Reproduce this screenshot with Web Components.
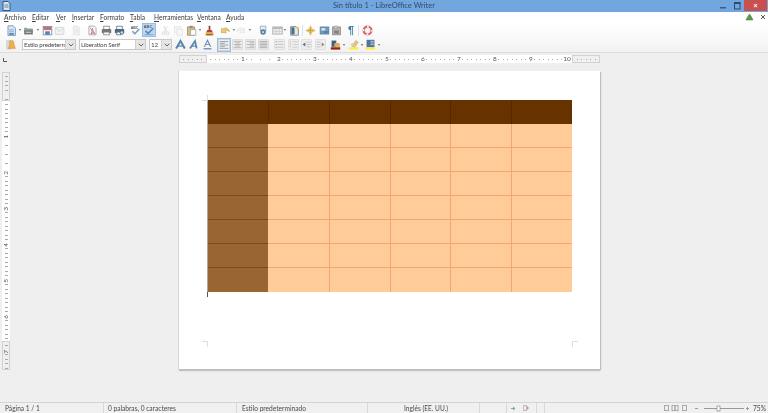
<!DOCTYPE html>
<html lang="es"><head><meta charset="utf-8"><title>Sin título 1 - LibreOffice Writer</title>
<style>
html,body{margin:0;height:100%;overflow:hidden}
body{display:flex;flex-direction:column;width:768px;height:413px;background:#efefef;font-family:Lato,"Open Sans",sans-serif;color:#444}
lo-workspace{flex:1;min-height:0}
</style></head><body>
<lo-titlebar>Sin título 1 - LibreOffice Writer</lo-titlebar>
<lo-chrome>
  <lo-menubar></lo-menubar>
  <lo-toolbar data-row="1"></lo-toolbar>
  <lo-toolbar data-row="2"></lo-toolbar>
</lo-chrome>
<lo-hruler></lo-hruler>
<lo-workspace>
  <lo-vruler slot="ruler"></lo-vruler>
  <lo-page><lo-table></lo-table></lo-page>
</lo-workspace>
<lo-statusbar></lo-statusbar>
<script>
const align=(c,pat)=>`<rect x=".5" y=".5" width="13" height="13" rx="1" fill="#eee" stroke="#d4d4d4"/>`+[3,5,7,9,11].map((y,i)=>`<path d="M${pat[i%2][0]} ${y}H${pat[i%2][1]}" stroke="${c}"/>`).join('');
const ICONS={
new:`<path d="M2.500 1H9l3 3v9.500H2.500z" fill="#dbe6f2" stroke="#5f8cbc"/><path d="M4 6h6M4 8h6" stroke="#7aa3cc"/><rect x="4" y="10" width="6" height="2.500" fill="#5a86ad"/>`,
open:`<path d="M2 4h3l1 1h6v3H2z" fill="#9aa5a9" stroke="#6d797e" stroke-width=".7"/><rect x="1.500" y="7" width="11" height="5" fill="#6c797e"/><rect x="3.500" y="8.500" width="7" height="1.500" fill="#c2c9cc"/>`,
save:`<rect x="1.500" y="2" width="11" height="10.500" fill="#fff" stroke="#5f82ad"/><rect x="2" y="2.500" width="10" height="4" fill="#cf6a6d"/><rect x="4" y="8" width="6" height="4.500" fill="#5f82ad"/>`,
mail:`<rect x="1.500" y="3" width="11" height="9" rx="1" fill="#f2f2f2" stroke="#d0d0d0"/><path d="M2 4l5 4 5-4" fill="none" stroke="#d0d0d0"/>`,
edit:`<path d="M3 1.500h6l2 2v9H3z" fill="#f2f2f2" stroke="#e0e0e0"/><path d="M5 5h4M5 7h4M5 9h4" stroke="#e2e2e2"/>`,
pdf:`<path d="M2.500 1.500h7l2 2v9h-9z" fill="#fafafa" stroke="#999"/><path d="M4 4c3 2 3 5 1 7 2-1 4-1 5 0-2-2-3-4-3-7" fill="none" stroke="#c94f4f" stroke-width="1.100"/>`,
print:`<rect x="3.500" y="1.500" width="7" height="4" fill="#fff" stroke="#7d7d7d"/><rect x="1" y="5" width="12" height="5.500" rx="1" fill="#71787b"/><rect x="3.500" y="9" width="7" height="3.500" fill="#fff" stroke="#7d7d7d"/>`,
preview:`<rect x="3.500" y="1.500" width="7" height="4" fill="#fff" stroke="#587280"/><rect x="1" y="5" width="12" height="5.500" rx="1" fill="#4f6b79"/><rect x="3.500" y="9" width="5" height="3.500" fill="#fff" stroke="#587280"/><circle cx="10" cy="9.500" r="2.300" fill="#bcd6e6" stroke="#3d5d6d"/>`,
spell:`<text x="1" y="5" font-size="4.500" font-weight="700" font-family="Liberation Sans" fill="#555">ABC</text><path d="M3 8l3 3 6-6" fill="none" stroke="#6a9bc8" stroke-width="1.800"/>`,
auto:`<text x="1" y="5" font-size="4.500" font-weight="700" font-family="Liberation Sans" fill="#555">ABC</text><path d="M3 8l3 3 6-6" fill="none" stroke="#4f86bd" stroke-width="1.800"/><path d="M2 12.500h10" stroke="#6a9bc8"/>`,
cut:`<path d="M5 1.500l3 7M9 1.500l-3 7" stroke="#d8d8d8" stroke-width="1.200"/><circle cx="4.500" cy="10.500" r="1.800" fill="none" stroke="#d4d4d4"/><circle cx="9.500" cy="10.500" r="1.800" fill="none" stroke="#d4d4d4"/>`,
copy:`<rect x="2" y="2" width="7" height="8" fill="#f6f6f6" stroke="#e4e4e4"/><rect x="5" y="5" width="7" height="8" fill="#f6f6f6" stroke="#e4e4e4"/>`,
paste:`<rect x="2" y="2.500" width="9" height="10.500" fill="#d7ba8a" stroke="#a78c5f"/><rect x="4.500" y="1" width="4" height="3" fill="#8f8f8f"/><rect x="6" y="6" width="6.500" height="7" fill="#fff" stroke="#a5a5a5"/>`,
brush:`<path d="M6 1h2v5H6z" fill="#6a3a2c"/><path d="M4.500 6h5l1.500 3H3z" fill="#b93a3d"/><path d="M2.500 9h9l1 4h-11z" fill="#e8a84c"/><path d="M3 12.500h8" stroke="#523"/>`,
undo:`<path d="M3 5.500C6 2.500 11 3.500 12 8.500 10 6.500 8 6.500 6.500 7.500L8 10 1.500 9.500 2 4z" fill="#ecca72" stroke="#b79a50" stroke-width=".7"/>`,
redo:`<path d="M11 5.500C8 2.500 3 3.500 2 8.500 4 6.500 6 6.500 7.500 7.500L6 10 12.500 9.500 12 4z" fill="#f2f2f2" stroke="#dedede" stroke-width=".7"/>`,
find:`<path d="M3 1.500h7v6H3z" fill="#e6edf4" stroke="#8aa0b6"/><circle cx="6.500" cy="9" r="3.500" fill="#55819f"/><circle cx="6.500" cy="9" r="1.500" fill="#bcd6e6"/>`,
table:`<rect x="1" y="2.500" width="12" height="9" fill="#f0f0f0" stroke="#a0a0a0"/><rect x="1" y="2.500" width="12" height="2.500" fill="#b8b8b8"/><path d="M1 8h12M5 5v6M9 5v6" stroke="#c8c8c8"/>`,
image:`<path d="M2 2h7l3 3v8H2z" fill="#e8e8e8" stroke="#7a7a7a"/><rect x="3" y="3" width="4" height="9" fill="#41708f"/><path d="M9 2l4 1-2 4z" fill="#e9c447"/>`,
star:`<path d="M7 1l1.800 4.200L13 7l-4.200 1.800L7 13 5.200 8.800 1 7l4.200-1.800z" fill="#f0cc60" stroke="#cda53c" stroke-width=".7"/><path d="M7 4v6M4 7h6" stroke="#c29a40"/>`,
gallery:`<rect x="1.500" y="2.500" width="11" height="9" fill="#6d9bc2" stroke="#5f7d96"/><rect x="3" y="4" width="5" height="3" fill="#d8e6ef"/><path d="M6 9h6" stroke="#3f6079"/>`,
db:`<rect x="2" y="2.500" width="10" height="10" fill="#b4b4b4" stroke="#8a8a8a"/><rect x="4" y="1.500" width="4" height="3" fill="#ddd" stroke="#999"/><rect x="4" y="7" width="6" height="4" fill="#828282"/>`,
help:`<circle cx="7" cy="7" r="5" fill="none" stroke="#dc5f64" stroke-width="2.600"/><circle cx="7" cy="7" r="5" fill="none" stroke="#fff" stroke-width="1.600" stroke-dasharray="2.500 5.350" stroke-dashoffset="1.200"/><circle cx="7" cy="7" r="2.500" fill="#fff" stroke="#c4c4c4" stroke-width=".5"/>`,
styles:`<rect x="1" y="2" width="5" height="11" fill="#d8d8d8" stroke="#c4c4c4" stroke-width=".6"/><path d="M4 4c0-3 6-3 6 0v2l2 6H3l2-6z" fill="#edb050" stroke="#cc9036" stroke-width=".6"/>`,
bold:`<path d="M1.500 12L7 2.500 12.500 12" fill="none" stroke="#5a86b2" stroke-width="2.600"/><path d="M4 9h6" stroke="#3f6f9e" stroke-width="1.300"/>`,
ital:`<path d="M2.500 12L9 2.500 11 12" fill="none" stroke="#5a86b2" stroke-width="2.200"/><path d="M5 9h5" stroke="#3f6f9e" stroke-width="1.200"/>`,
under:`<path d="M3 10L7 1.500 11 10" fill="none" stroke="#5a86b2" stroke-width="1.300"/><path d="M4.500 7h5" stroke="#5a86b2"/><path d="M2 12.500h10" stroke="#3f6f9e" stroke-width="1.300"/>`,
left:align('#8d9aa7',[[2,12],[2,8]]),
center:align('#aaa',[[2,12],[4,10]]),
right:align('#aaa',[[2,12],[6,12]]),
just:align('#a0a0a0',[[2,12],[2,12]]),
bullets:`<rect x=".5" y=".5" width="13" height="13" rx="1" fill="#eee" stroke="#d8d8d8"/><path d="M5 3.500h7M5 7h7M5 10.500h7" stroke="#bbb"/><path d="M2 3.500h2M2 7h2M2 10.500h2" stroke="#999"/>`,
numbers:`<rect x=".5" y=".5" width="13" height="13" rx="1" fill="#eee" stroke="#d8d8d8"/><path d="M6 3.500h6M6 7h6M6 10.500h6" stroke="#c4c4c4"/><path d="M3 2.500v9" stroke="#aaa" stroke-dasharray="1.500 1.500"/>`,
indL:`<rect x=".5" y=".5" width="13" height="13" rx="1" fill="#eee" stroke="#d8d8d8"/><path d="M7 4h5M7 7h5M7 10h5" stroke="#bbb"/><path d="M5.500 4.500v5L2 7z" fill="#666"/>`,
indR:`<rect x=".5" y=".5" width="13" height="13" rx="1" fill="#eee" stroke="#d8d8d8"/><path d="M2 4h5M2 7h5M2 10h5" stroke="#bbb"/><path d="M8.500 4.500v5L12 7z" fill="#888"/>`,
color:`<path d="M2 2h6v8H2z" fill="#3a6480"/><path d="M6 5h6l1 5H5z" fill="#e7a850"/><rect x="1" y="10.500" width="12" height="3" fill="#991f1f"/>`,
hilite:`<path d="M5 9l5-7 3 2-5 7z" fill="#e8c482" stroke="#bc9048" stroke-width=".6"/><path d="M3 7l3-2 2 3-3 2z" fill="#d0d0d0"/><rect x="1" y="10.500" width="12" height="3" fill="#fdee3e"/>`,
bg:`<rect x="2" y="1" width="10" height="9.500" fill="#4f74a0"/><path d="M7 3h4M7 5h4M7 7h4" stroke="#cdd9e6"/><rect x="1" y="10.500" width="12" height="3" fill="#fdee3e"/>`
};
const svg=(n,s=14)=>`<svg width="${s}" height="${s}" viewBox="0 0 14 14" aria-hidden="true">${ICONS[n]}</svg>`;

class Base extends HTMLElement{
  constructor(){super();this.attachShadow({mode:'open'});}
  set html(v){this.shadowRoot.innerHTML=v;}
}
customElements.define('lo-titlebar',class extends Base{connectedCallback(){this.html=`<style>
:host{display:flex;flex:none;height:11.500px;background:#72a6de;align-items:center;position:relative;color:#2f4d6e;font:7.500px Lato,"Open Sans",sans-serif}
.t{flex:1;text-align:center;filter:blur(.2px)}
.w{position:absolute;right:1px;top:0;display:flex;height:10.500px;align-items:stretch}
.b{display:flex;align-items:center;justify-content:center;width:14px}
.x{width:23px;background:#c8504f;color:#fff;font:700 7px "Liberation Sans",sans-serif}
</style><lo-doc-icon></lo-doc-icon><div class="t"><slot></slot></div><div class="w"><div class="b"><svg width="8" height="8"><rect x="1" y="6" width="6" height="1.500" fill="#3e5c7c"/></svg></div><div class="b"><svg width="8" height="9"><rect x="1.500" y="2" width="5.500" height="6" fill="none" stroke="#2f4b68"/><rect x="1" y="1" width="6.500" height="2" fill="#2f4b68"/></svg></div><div class="b x">×</div></div>`;}});
customElements.define('lo-doc-icon',class extends Base{connectedCallback(){this.html=`<style>:host{display:block;position:absolute;left:2px;top:1px;line-height:0}</style><svg width="9" height="10" viewBox="0 0 9 10"><path d="M1 .5h5l2 2v7H1z" fill="#d8e6f2" stroke="#35597c"/><path d="M2.500 4h4M2.500 6h4" stroke="#5a82a6"/></svg>`;}});
customElements.define('lo-chrome',class extends Base{connectedCallback(){this.html=`<style>:host{display:flex;flex-direction:column;flex:none;height:40.500px;background:linear-gradient(#fff 0,#fff 30%,#f2f2f2 100%);border-bottom:1px solid #dcdcdc}</style><slot></slot>`;}});
customElements.define('lo-menubar',class extends Base{connectedCallback(){
  const m=[['Archivo',4],['Editar',32],['Ver',56],['Insertar',72],['Formato',100],['Tabla',130],['Herramientas',154],['Ventana',197],['Ayuda',226]];
  this.html=`<style>:host{display:flex;height:11px;align-items:center;position:relative;font:6.600px Lato,"Open Sans",sans-serif;color:#3c3c3c;filter:blur(.2px)}
  .m{display:flex;width:250px;flex:none}
  span{display:block;white-space:nowrap;flex:none}
  span::first-letter{text-decoration:underline}
  .e{margin-left:auto;display:flex;align-items:center;gap:6px;padding-right:2px}
  </style><div class="m">${m.map((x,i)=>`<span style="width:${(i<m.length-1?m[i+1][1]:x[1]+22)-x[1]}px;margin-left:${i?0:4}px">${x[0]}</span>`).join('')}</div>
  <div class="e"><svg width="9" height="8" viewBox="0 0 9 8"><path d="M1 7l1.500-3L4.500 1l2 3L8 7z" fill="#5d9a4a" stroke="#3f7536" stroke-width=".5"/></svg><svg width="6" height="6" viewBox="0 0 6 6"><path d="M1 1l4 4M5 1L1 5" stroke="#555" stroke-width="1"/></svg></div>`;
}});
const ROW={
 1:[[11,'new'],[20,'.'],[28,'open'],[38,'.'],[47,'save'],[59,'mail'],[76,'edit'],[92,'pdf'],[106,'print'],[119,'preview'],[135,'spell'],[149,'auto','on'],[165,'cut'],[178,'copy'],[191,'paste'],[199.500,'.'],[209,'brush'],[225,'undo'],[234,'.'],[240,'redo'],[250,'.'],[263,'find'],[277,'table'],[285,'.'],[294,'image'],[302,'|'],[310,'star'],[324,'gallery'],[336,'db'],[351,'¶'],[358.500,'|'],[367,'help']],
 2:[[11,'styles'],[49,'#Estilo predeterm',54],[112.500,'#Liberation Serif',67],[160.500,'#12',23],[180,'bold'],[193,'ital'],[207,'under'],[224,'left','on'],[237,'center'],[250,'right'],[263,'just'],[279,'bullets'],[293,'numbers'],[306,'indL'],[320,'indR'],[335,'color'],[344,'.'],[353,'hilite'],[362,'.'],[370,'bg'],[379,'.']]
};
customElements.define('lo-combo',class extends Base{connectedCallback(){
  this.html=`<style>:host{display:flex;box-sizing:border-box;height:11px;border:1px solid #c9c9c9;background:#fff;font:6.300px Lato,"Open Sans",sans-serif;letter-spacing:-.2px;color:#4a4a4a;align-items:stretch}
  .v{flex:1;min-width:0;white-space:nowrap;padding-left:1px;line-height:9px}
  .a{flex:none;width:9px;background:#e6e6e6;border-left:1px solid #d0d0d0;display:flex;align-items:center;justify-content:center}
  </style><div class="v">${this.dataset.v}</div><div class="a"><svg width="6" height="4"><path d="M.7 .7L3 3l2.300-2.300" fill="none" stroke="#666"/></svg></div>`;
}});
customElements.define('lo-toolbar',class extends Base{connectedCallback(){
  let end=0,out='';
  for(const [cx,n,a] of ROW[this.dataset.row]){
    let w=n==='.'?3:n==='|'?1:n[0]==='#'?a:(a==='on'?14:12);
    const ml=cx-w/2-end; end=cx+w/2;
    const st=`margin-left:${ml}px;width:${w}px`;
    if(n==='.')out+=`<i class="dot" style="${st}"></i>`;
    else if(n==='|')out+=`<i class="sep" style="${st}"></i>`;
    else if(n==='¶')out+=`<b class="ic pil" style="${st}">¶</b>`;
    else if(n[0]==='#')out+=`<lo-combo data-v="${n.slice(1)}" style="${st}"></lo-combo>`;
    else out+=`<b class="ic${a?' on':''}" style="${st}">${svg(n,a?12:11)}</b>`;
  }
  this.html=`<style>:host{display:flex;flex:none;height:${this.dataset.row==='1'?15:14.500}px;align-items:center;filter:blur(.25px)}
  .ic{display:flex;align-items:center;justify-content:center;flex:none;height:12px}
  .pil{font:700 11px/12px "Liberation Sans",sans-serif;color:#3a78a8}
  .on{height:14px;background:#bcd6f0;box-shadow:inset 0 0 0 1px #98bde0}
  .dot{display:flex;flex:none;height:3px;align-items:center;justify-content:center}
  .dot::before{content:"";border:1.500px solid transparent;border-top:2px solid #666;border-bottom:0}
  .sep{flex:none;height:11px;background:#e2e2e2}
  lo-combo{flex:none}
  </style>${out}`;
}});
customElements.define('lo-hruler',class extends Base{connectedCallback(){
  const tick=`repeating-linear-gradient(90deg,transparent 0 3.500px,#aaa 3.500px 4.500px)`;
  let c='';for(let i=1;i<=10;i++)c+=`<div class="c"><span>${i}</span></div>`;
  this.html=`<style>:host{display:flex;flex:none;height:13px;box-sizing:border-box;padding-top:2px;align-items:flex-start;font:6.500px Lato,"Open Sans",sans-serif;color:#555;filter:blur(.25px)}
  .tab{width:5px;margin-left:3px;height:9px;display:flex;align-items:center}
  .g{box-sizing:border-box;height:8px;border:1px solid #d2d2d2;background:${tick} center/100% 1px no-repeat,#efefef}
  .w{display:grid;grid-template-columns:repeat(10,36px);width:365px;height:8px;background:#fff;background-image:${tick};background-size:100% 1px;background-position:0 4px;background-repeat:no-repeat}
  .c{display:flex;justify-content:flex-end;line-height:8px}
  .c span{background:#fff;padding:0 1px;transform:translateX(50%);line-height:8px;height:8px}
  </style><div class="tab"><svg width="4" height="4"><path d="M.5 0v3.500H4" fill="none" stroke="#555"/></svg></div><div class="g" style="margin-left:171px;width:28px"></div><div class="w">${c}</div><div class="g" style="width:28px"></div>`;
}});
customElements.define('lo-vruler',class extends Base{connectedCallback(){
  const tick=`repeating-linear-gradient(180deg,transparent 0 3.500px,#aaa 3.500px 4.500px)`;
  let c='';for(let i=1;i<=6;i++)c+=`<div class="c"><span>${i}</span></div>`;
  this.html=`<style>:host{display:flex;flex-direction:column;flex:none;width:8px;margin:6px 0 0 2px;font:6.500px Lato,"Open Sans",sans-serif;color:#555;filter:blur(.25px)}
  .g{box-sizing:border-box;height:29px;border:1px solid #d2d2d2;background:${tick} center/3px 100% no-repeat,#efefef}
  .w{height:240px;background:${tick} center/3px 100% no-repeat,#fff}
  .c{height:36px;display:flex;align-items:flex-end;justify-content:center}
  .c span{writing-mode:vertical-rl;transform:translateY(50%) rotate(180deg);background:#fff;line-height:8px;padding:1px 0}
  .e{display:flex;justify-content:center;align-items:flex-start;padding-top:8px}
  .e span{writing-mode:vertical-rl;transform:rotate(180deg);background:#efefef;line-height:6px}
  </style><div class="g"></div><div class="w">${c}</div><div class="g e"><span>7</span></div>`;
}});
customElements.define('lo-workspace',class extends Base{connectedCallback(){
  this.html=`<style>:host{display:flex;align-items:flex-start;min-height:0;background:#efefef}</style><slot name="ruler"></slot><slot></slot>`;
}});
customElements.define('lo-page',class extends Base{connectedCallback(){
  const mark=(l,t,p)=>`<svg class="mk" style="left:${l}px;top:${t}px" width="6" height="6"><path d="${p}" fill="none" stroke="#dedede"/></svg>`;
  this.html=`<style>:host{display:block;box-sizing:border-box;width:421px;height:298px;margin:5px 0 0 169px;padding:29px 28px 0 29px;background:#fff;position:relative;box-shadow:-1px 0 0 #d4d4d4,1px 1px 1px #bdbdbd,0 2px 1px #c4c4c4}
  .mk{position:absolute}
  .cur{width:1px;height:5px;background:#555;margin-left:-1px}
  .edge{position:absolute;left:28px;top:29px;width:1px;height:192px;background:#b3a79c}
  </style><slot></slot><div class="cur"></div><div class="edge"></div>
  ${mark(23,24,'M5.500 0v5.500H0')}${mark(23,270,'M0 .5h5.500V6')}${mark(393,270,'M6 .5H.5V6')}`;
}});
customElements.define('lo-table',class extends Base{connectedCallback(){
  let c='';
  for(let r=0;r<8;r++)for(let k=0;k<6;k++){
    c+=`<div class="${r===0?'h':k===0?'f':'b'}${k>0?' ll':''}${r<7?' bb':''}"></div>`;
  }
  this.html=`<style>:host{display:grid;grid-template-columns:60px 61px 61px 60px 61px 61px;grid-template-rows:repeat(8,24px);width:364px}
  .h{background:#663300}.f{background:#996633}.b{background:#ffcc99}
  div{box-sizing:border-box}
  .b.ll{border-left:1px solid #f2a674}.b.bb{border-bottom:1px solid #f2a674}
  .f.bb{border-bottom:1px solid #7c4c1c}
  .h.ll{border-left:1px solid #552800}
  .f+.b{border-left:0}
  </style>${c}`;
}});
customElements.define('lo-statusbar',class extends Base{connectedCallback(){
  this.html=`<style>:host{display:flex;flex:none;height:11px;box-sizing:border-box;border-top:1px solid #d4d4d4;font:6.600px Lato,"Open Sans",sans-serif;color:#4a4a4a;background:#f0f0f0;align-items:stretch;filter:blur(.2px)}
  .f{flex:none;box-sizing:border-box;border-right:1px solid #d8d8d8;display:flex;align-items:center;white-space:nowrap;overflow:hidden}
  </style>
  <div class="f" style="width:104px;padding-left:5px">Página 1 / 1</div>
  <div class="f" style="width:133px;padding-left:4px">0 palabras, 0 caracteres</div>
  <div class="f" style="width:131px;padding-left:5px">Estilo predeterminado</div>
  <div class="f" style="width:112px;padding-left:36px">Inglés (EE. UU.)</div>
  <div class="f" style="width:27px"></div>
  <div class="f" style="width:30px;padding-left:4px;gap:7px"><svg width="5" height="5"><path d="M0 2.500h4M2 1l2 1.500L2 4" fill="none" stroke="#999"/></svg><svg width="6" height="6"><rect x=".5" y=".5" width="3" height="5" fill="none" stroke="#bbb"/><path d="M4 1v4l2-2z" fill="#d88"/></svg></div>
  <div class="f" style="width:8px"></div>
  <div class="f" style="flex:0 0 205px;border:0;padding-left:119px;gap:1px"><svg width="24" height="6"><g fill="none" stroke="#aaa"><rect x=".5" y=".5" width="4" height="5"/><rect x="8" y=".5" width="3" height="5"/><rect x="11" y=".5" width="3" height="5"/><rect x="18.500" y=".5" width="4" height="5"/></g></svg><svg style="margin-left:6px" width="54" height="7"><path d="M0 3.500h3M51 3.500h3M52.500 2v3M9 3.500h40" stroke="#999"/><rect x="22" y="1" width="3" height="5" fill="#fff" stroke="#888" stroke-width=".7"/></svg></div>
  <div class="f" style="flex:1;border:0;padding-left:3px">75%</div>`;
}});
</script>
</body></html>
